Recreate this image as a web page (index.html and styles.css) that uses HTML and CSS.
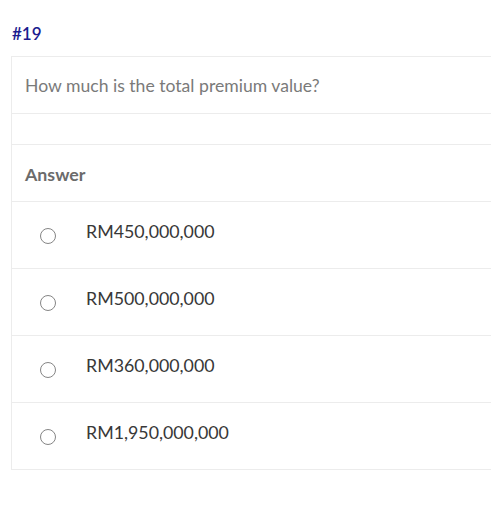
FILE: index.html
```html
<!DOCTYPE html>
<html>
<head>
<meta charset="utf-8">
<link rel="stylesheet" href="styles.css">
</head>
<body>
<div class="page">
  <div class="qnum">#19</div>
  <div class="card">
    <div class="row question">How much is the total premium value?</div>
    <div class="row spacer"></div>
    <div class="row answer-head">Answer</div>
    <div class="row option"><span class="radio"></span><span class="label">RM450,000,000</span></div>
    <div class="row option"><span class="radio"></span><span class="label">RM500,000,000</span></div>
    <div class="row option"><span class="radio"></span><span class="label">RM360,000,000</span></div>
    <div class="row option"><span class="radio"></span><span class="label">RM1,950,000,000</span></div>
  </div>
</div>
</body>
</html>
```
FILE: styles.css
```css
html, body {
  margin: 0;
  padding: 0;
  background: #ffffff;
}
body {
  font-family: Lato, "Open Sans", sans-serif;
}
.page {
  padding: 24px 0 0 11px;
}
.qnum {
  color: #1c1c8f;
  font-size: 17px;
  font-weight: 600;
  line-height: 20px;
  padding-left: 1px;
  height: 32px;
}
.card {
  border-left: 1px solid #ececec;
  border-top: 1px solid #ececec;
  margin-right: -10px;
}
.row {
  border-bottom: 1px solid #ececec;
  box-sizing: border-box;
}
.question {
  height: 57px;
  display: flex;
  align-items: center;
  padding-left: 13px;
  color: #7a7a7a;
  font-size: 17.6px;
  font-weight: 400;
  padding-top: 1px;
}
.spacer {
  height: 31px;
}
.answer-head {
  height: 57px;
  display: flex;
  align-items: center;
  padding-left: 13px;
  color: #6b6b6b;
  font-weight: 700;
  font-size: 17.8px;
  padding-top: 1px;
}
.option {
  height: 67px;
  display: flex;
  align-items: center;
  padding-left: 28px;
}
.radio {
  width: 14px;
  height: 14px;
  border: 1px solid #858585;
  border-radius: 50%;
  flex: none;
  margin-top: 1px;
}
.label {
  margin-left: 30px;
  color: #383838;
  font-size: 17.8px;
  margin-top: -9px;
}
```
